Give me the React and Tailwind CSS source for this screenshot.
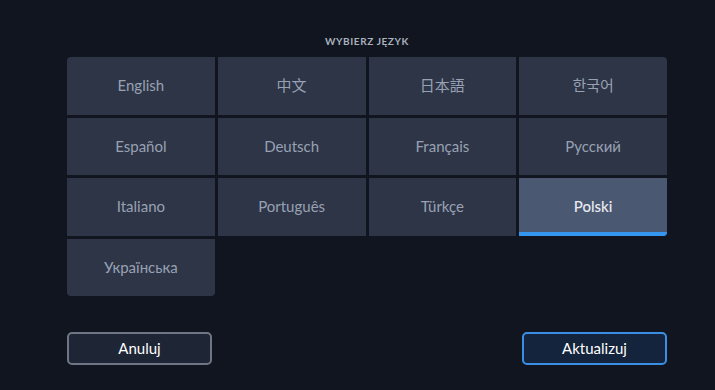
import React, { useState } from 'react';

const languages = [
  'English', '中文', '日本語', '한국어',
  'Español', 'Deutsch', 'Français', 'Русский',
  'Italiano', 'Português', 'Türkçe', 'Polski',
  'Українська',
];

// zaokrąglenia tylko na zewnętrznych rogach siatki
const corners = {
  0: 'rounded-tl-[4px]',
  3: 'rounded-tr-[4px]',
  11: 'rounded-br-[4px]',
  12: 'rounded-bl-[4px] rounded-br-[4px]',
};

function LangTile({ label, index, selected, onSelect }) {
  return (
    <button
      onClick={onSelect}
      className={`relative flex items-center justify-center overflow-hidden text-[15px] ${
        selected ? 'bg-[#4b5872] text-[#e8ebf0] font-medium' : 'bg-[#2d3547] text-[#98a1b3]'
      } ${corners[index] || ''}`}
    >
      <span className="-mt-[1px]">{label}</span>
      {selected && <div className="absolute bottom-0 left-0 right-0 h-[4px] bg-[#3596f0]" />}
    </button>
  );
}

export default function App() {
  const [current, setCurrent] = useState('Polski');

  return (
    <div
      className="w-[715px] h-[390px] bg-[#10151f] flex flex-col pl-[67px] pt-[35px]"
      style={{ fontFamily: 'Lato, "Noto Sans CJK SC", "Noto Sans CJK KR", sans-serif' }}
    >
      <div className="w-[600px] text-center text-[10px] leading-[12px] font-bold tracking-[0.06em] text-[#a9b0be]">
        WYBIERZ JĘZYK
      </div>

      {/* siatka języków */}
      <div className="w-[600px] h-[239px] mt-[10px] grid grid-cols-4 grid-rows-4 gap-[3px]">
        {languages.map((lang, i) => (
          <LangTile
            key={lang}
            label={lang}
            index={i}
            selected={lang === current}
            onSelect={() => setCurrent(lang)}
          />
        ))}
      </div>

      {/* przyciski */}
      <div className="w-[600px] mt-[36px] flex justify-between">
        <button className="w-[145px] h-[33px] rounded-[5px] border-2 border-[#6f7585] bg-[#1e2535] text-white text-[15px]">
          Anuluj
        </button>
        <button className="w-[145px] h-[33px] rounded-[5px] border-2 border-[#3a8fe4] bg-[#13243c] text-white text-[15px]">
          Aktualizuj
        </button>
      </div>
    </div>
  );
}
